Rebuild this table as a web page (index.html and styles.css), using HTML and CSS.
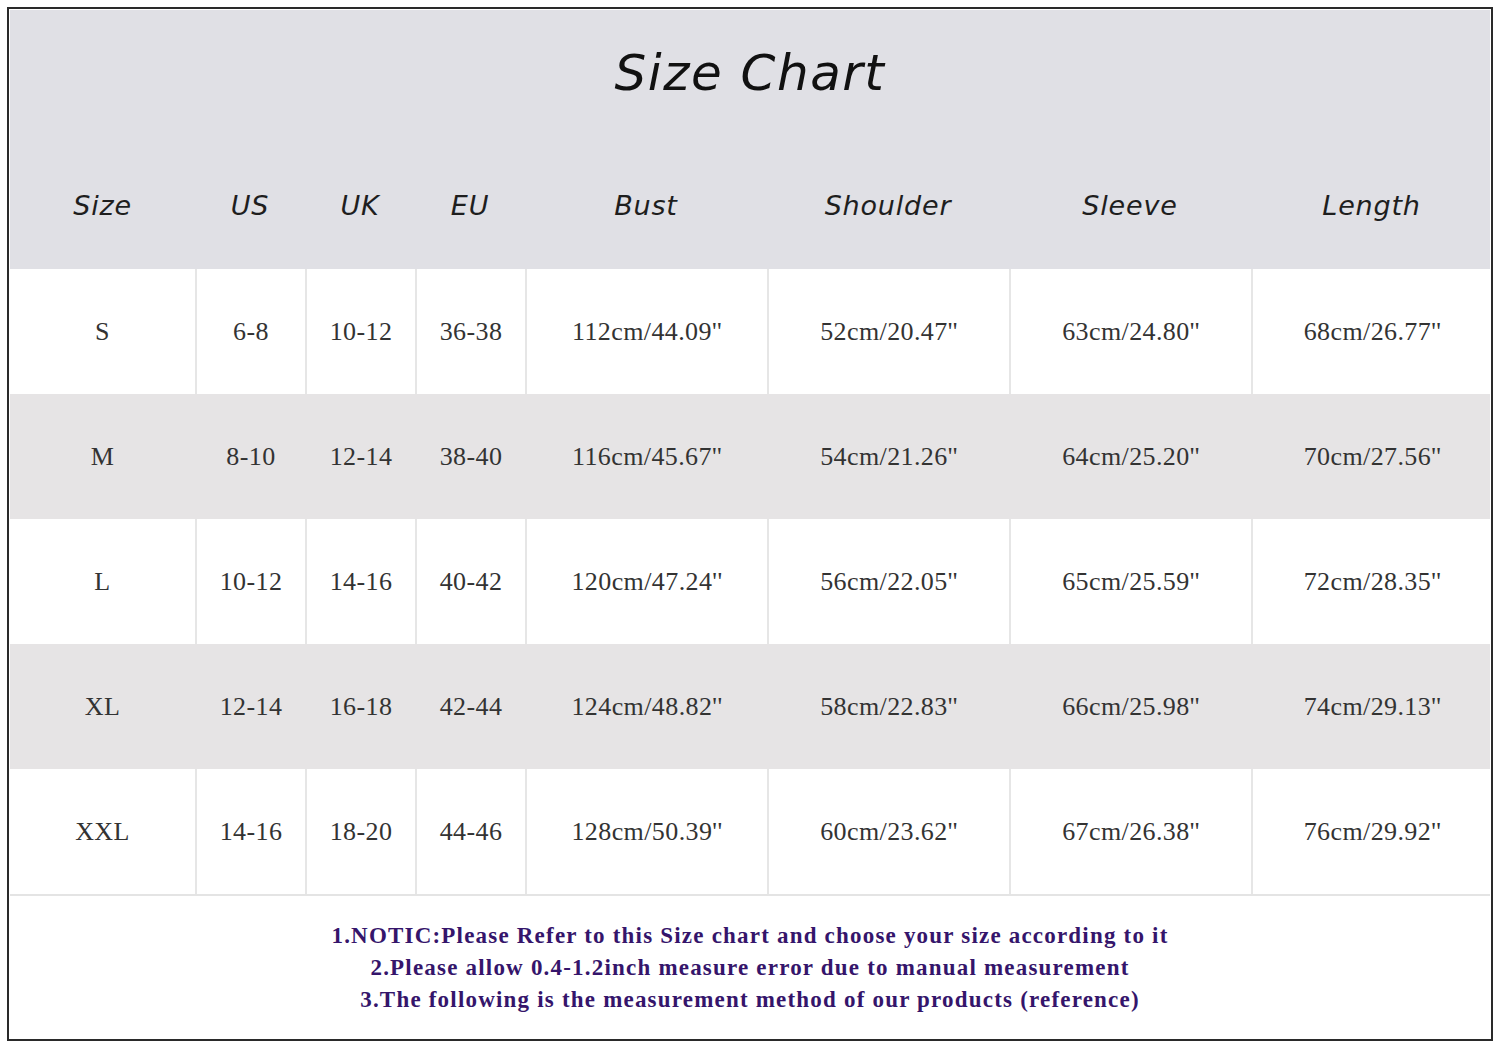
FILE: index.html
```html
<!DOCTYPE html>
<html>
<head>
<meta charset="utf-8">
<link rel="stylesheet" href="styles.css">
</head>
<body>
<div class="frame">
  <div class="chart">
    <div class="head">
      <div class="title">Size Chart</div>
      <div class="labels">
        <div>Size</div><div>US</div><div>UK</div><div>EU</div><div>Bust</div><div>Shoulder</div><div>Sleeve</div><div>Length</div>
      </div>
    </div>
    <div class="row">
      <div>S</div><div>6-8</div><div>10-12</div><div>36-38</div><div>112cm/44.09''</div><div>52cm/20.47''</div><div>63cm/24.80''</div><div>68cm/26.77''</div>
    </div>
    <div class="row alt">
      <div>M</div><div>8-10</div><div>12-14</div><div>38-40</div><div>116cm/45.67''</div><div>54cm/21.26''</div><div>64cm/25.20''</div><div>70cm/27.56''</div>
    </div>
    <div class="row">
      <div>L</div><div>10-12</div><div>14-16</div><div>40-42</div><div>120cm/47.24''</div><div>56cm/22.05''</div><div>65cm/25.59''</div><div>72cm/28.35''</div>
    </div>
    <div class="row alt">
      <div>XL</div><div>12-14</div><div>16-18</div><div>42-44</div><div>124cm/48.82''</div><div>58cm/22.83''</div><div>66cm/25.98''</div><div>74cm/29.13''</div>
    </div>
    <div class="row last">
      <div>XXL</div><div>14-16</div><div>18-20</div><div>44-46</div><div>128cm/50.39''</div><div>60cm/23.62''</div><div>67cm/26.38''</div><div>76cm/29.92''</div>
    </div>
    <div class="notes">
      <p>1.NOTIC:Please Refer to this Size chart and choose your size according to it</p>
      <p>2.Please allow 0.4-1.2inch measure error due to manual measurement</p>
      <p>3.The following is the measurement method of our products (reference)</p>
    </div>
  </div>
</div>
</body>
</html>
```
FILE: styles.css
```css
html, body {
  margin: 0;
  padding: 0;
  background: #ffffff;
}
.frame {
  margin: 7px 0 0 7px;
  width: 1482px;
  height: 1030px;
  border: 2px solid #2a2a2a;
  padding: 0;
  box-sizing: content-box;
  background: #fff;
}
.chart {
  padding: 1px 1px 0 1px;
  display: flex;
  flex-direction: column;
}
.head {
  background: #e0e0e5;
  height: 259px;
  display: flex;
  flex-direction: column;
}
.title {
  height: 126px;
  display: flex;
  align-items: center;
  justify-content: center;
  font-family: "DejaVu Sans", sans-serif;
  font-style: oblique;
  font-size: 50px;
  color: #111;
  letter-spacing: 1.5px;
}
.labels, .row {
  display: grid;
  grid-template-columns: 185px 110px 110px 110px 242px 242px 242px 241px;
}
.labels {
  flex: 1;
}
.labels div {
  display: flex;
  align-items: center;
  justify-content: center;
  font-family: "DejaVu Sans", sans-serif;
  font-style: oblique;
  font-size: 27px;
  letter-spacing: 0.8px;
  color: #1e1e1e;
  padding-top: 6px;
}
.row {
  height: 125px;
}
.row div {
  display: flex;
  align-items: center;
  justify-content: center;
  font-family: "Liberation Serif", serif;
  font-size: 26px;
  letter-spacing: 0.4px;
  color: #333333;
  border-left: 2px solid #e6e6e6;
}
.row div:first-child {
  border-left: none;
}
.row.alt {
  background: #e6e4e5;
}
.row.alt div {
  border-left-color: #e6e4e5;
}
.row.last {
  border-bottom: 2px solid #e4e4e4;
}
.notes {
  padding-top: 24px;
  text-align: center;
  font-family: "Liberation Serif", serif;
  font-weight: bold;
  font-size: 23px;
  color: #35156b;
  letter-spacing: 1.2px;
}
.notes p {
  margin: 0;
  line-height: 32px;
}
```
